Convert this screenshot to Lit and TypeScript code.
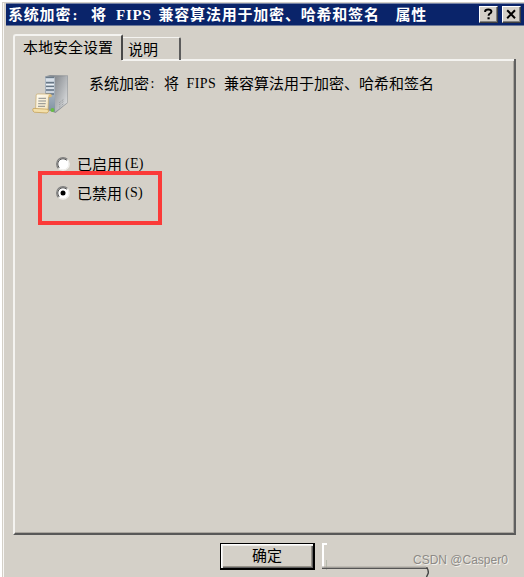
import { LitElement, html, css, svg } from "lit";
import { customElement } from "lit/decorators.js";

type Seg = [string, number, boolean?];

const line = (segs: Seg[]) =>
  segs.map(([t, w, latin]) => html`<span class="seg ${latin ? "lat" : ""}" style="width:${w}px">${t}</span>`);

const TITLE: Seg[] = [
  ["系统加密", 64.5], [":", 18.5, true], ["将", 25], ["FIPS", 42.5, true],
  ["兼容算法用于加密、哈希和签名", 237], ["属性", 34],
];
const HEADING: Seg[] = [
  ["系统加密", 61.5], [":", 13.5, true], ["将", 22.5], ["FIPS", 37.5, true],
  ["兼容算法用于加密、哈希和签名", 211],
];

const serverIcon = svg`
  <defs>
    <linearGradient id="side" x1="0" y1="0" x2="1" y2="1">
      <stop offset="0" stop-color="#85898e"/><stop offset=".5" stop-color="#b4b7ba"/><stop offset="1" stop-color="#e6e7e8"/>
    </linearGradient>
    <linearGradient id="front" x1="0" y1="0" x2="0" y2="1">
      <stop offset="0" stop-color="#c9d3dd"/><stop offset="1" stop-color="#7f90a0"/>
    </linearGradient>
    <linearGradient id="paper" x1="0" y1="0" x2="1" y2="1">
      <stop offset="0" stop-color="#fffdf4"/><stop offset="1" stop-color="#f1dfb5"/>
    </linearGradient>
  </defs>
  <path d="M13 1.5 L18 0 L36 0.5 L35.5 28 L23.5 38 L13 34Z" fill="#8d9297"/>
  <path d="M22.7 2 L35.5 1 L35 27.8 L23 37Z" fill="url(#side)"/>
  <path d="M13.3 1.5 L22.7 2 L23 37 L13.3 34Z" fill="url(#front)"/>
  <path d="M13.6 2.3H22.3M14 7.7H22M14 11.3H22M14 15H22M14 19H22" stroke="#4d5d6e" stroke-width="1.1"/>
  <path d="M14 5H22M14 9.6H22M14 13.2H22M14 17H22" stroke="#edf2f7" stroke-width="1.2"/>
  <path d="M27 30L32 26M27 32.4L32 28.4M27 28L32 24" stroke="#858a8e" stroke-width=".8" stroke-dasharray="1 1"/>
  <circle cx="20.5" cy="35" r="2" fill="#68bd45"/>
  <path d="M4.2 20 Q4 19 6 19 L18 19 Q20.5 20 18.8 22 L16.5 22 L16 36 L3.5 36Z" fill="url(#paper)" stroke="#c9aa6a" stroke-width=".7"/>
  <path d="M16.5 22 Q16.3 19 18.5 19.2 Q20.7 20 19 22Z" fill="#dfbd78"/>
  <path d="M6.5 23.3H14M6.3 26H14M6.2 28.7H13.7M6 31.3H13" stroke="#8b8d8b" stroke-width="1"/>
  <path d="M.8 34 Q1 33.4 2 33.4 L12.5 34 L16 34.3 Q17.5 36.5 15 38 L2.2 37.2 Q.6 36.5.8 34Z" fill="#f3dfa9" stroke="#c5a25a" stroke-width=".8"/>`;

@customElement("app-root")
export class AppRoot extends LitElement {
  static styles = css`
    :host {
      display: block; width: 524px; height: 577px; overflow: hidden; background: #fff;
      font: 15px/18px "Noto Sans CJK SC", sans-serif; color: #000;
    }
    * { box-sizing: border-box; }
    .window {
      position: relative; margin: 2px 0 0 2px; height: 575px; background: #d4d0c8;
      border-left: 1px solid #d4d0c8; border-top: 1px solid #d4d0c8;
      box-shadow: inset 1px 0 #f8f7f5; padding: 0 0 0 3px;
      display: flex; flex-direction: column;
    }
    .title {
      height: 23px; background: #0a246a; color: #fff; display: flex; align-items: center;
      padding: 0 3px 0 2px; font-weight: 700; flex: none;
      border-top: 1px solid #7783a4; border-bottom: 1px solid #6c7898;
    }
    .text { display: flex; flex: 1; white-space: pre; }
    .seg { display: block; flex: none; white-space: pre; }
    .lat { font-family: "Liberation Serif", serif; font-size: 14px; letter-spacing: .4px; padding-top: 1px; }
    .title .text { margin-top: -1px; }
    .title .seg { letter-spacing: .8px; }
    .title .lat { letter-spacing: .8px; font-size: 15px; }
    .cap {
      width: 19px; height: 17px; background: #d4d0c8; margin-left: 4px; flex: none;
      border: 1px solid; border-color: #fff #404040 #404040 #fff; box-shadow: inset -1px -1px #808080;
    }
    .cap svg { display: block; width: 17px; height: 15px; }
    .tabs { display: flex; align-items: flex-end; height: 34px; padding-left: 7px; flex: none; position: relative; z-index: 1; }
    .tab { white-space: pre; }
    .on {
      width: 110px; height: 26px; border: 2px solid #f4f3f0; border-bottom: 0; border-right: 2px solid #484848;
      border-radius: 3px 2px 0 0; background: #d4d0c8; padding: 2px 0 0 8px;
    }
    .off {
      width: 58px; height: 23px; border-top: 1px solid #f4f3f0; border-right: 2px solid #5c5c5c;
      border-radius: 0 2px 0 0; padding: 2px 0 0 5px;
    }
    .panel {
      margin: -1px 8px 0 7px; height: 476px; flex: none; border-left: 2px solid #f4f3f0;
      border-right: 2px solid #606060; border-bottom: 2px solid #585858; position: relative;
      box-shadow: inset -1px -1px #aaa69f; padding: 14px 0 0 17px;
    }
    .panel::before { content: ""; position: absolute; top: 0; left: 107px; right: 0; height: 2px; background: #f4f3f0; }
    .head { display: flex; height: 42px; }
    .icon { width: 38px; height: 40px; margin-top: 2px; flex: none; }
    .head .text { margin: 1px 0 0 19px; }
    .radios { margin: 34px 0 0 24px; }
    .radio { display: flex; height: 29px; align-items: center; }
    .radio svg { width: 14px; height: 14px; margin-right: 7px; }
    .key { font: 14px/18px "Liberation Serif", serif; margin-left: 3px; letter-spacing: .3px; }
    .mark { position: absolute; left: 23px; top: 112px; width: 124px; height: 54px; border: 4px solid #fb3a38; }
    .foot { display: flex; padding: 8px 0 0 214px; flex: 1; position: relative; }
    .ok {
      width: 95px; height: 27px; border: 1px solid #000; border-width: 1px 2px 2px 1px; text-align: center;
      line-height: 22px; box-shadow: inset 1px 1px #fff, inset 2px 2px #efeeeb, inset -1px -1px #606060, inset -2px -2px #969289;
    }
    .ghost { margin-left: 7px; width: 107px; height: 34px; flex: none; }
    .mk {
      position: absolute; left: 407px; top: 17px; font: 12px/16px "Liberation Sans", sans-serif;
      color: #8d8a86; text-shadow: 1px 1px #f2f0ec; white-space: pre;
    }
  `;

  private radio(label: string, key: string, on: boolean) {
    return html`<div class="radio">
      <svg viewBox="0 0 14 14">
        <circle cx="7" cy="7" r="5.8" fill="#fff"/>
        <path d="M2.5 11.5A6.2 6.2 0 0 1 11.5 2.5" fill="none" stroke="#808080" stroke-width="1.2"/>
        <path d="M3.3 10.7A5.2 5.2 0 0 1 10.7 3.3" fill="none" stroke="#505050"/>
        <path d="M11.4 2.6A6.2 6.2 0 0 1 2.6 11.4" fill="none" stroke="#f4f3f0" stroke-width="1.2"/>
        ${on ? svg`<circle cx="7" cy="7" r="2.5" fill="#000"/>` : ""}
      </svg><span>${label}</span><span class="key">${key}</span></div>`;
  }

  render() {
    return html`<div class="window">
      <div class="title">
        <div class="text">${line(TITLE)}</div>
        <div class="cap"><svg viewBox="0 0 17 15"><path d="M5.2 5V4.2Q5.2 2.5 8.3 2.5T11.4 4.6Q11.4 6 9.8 6.7Q8.6 7.3 8.6 8.8" fill="none" stroke="#000" stroke-width="2"/><path d="M7.5 10.3h2.2v2H7.5z"/></svg></div>
        <div class="cap"><svg viewBox="0 0 17 15"><path d="M4.2 3.2L12 11.2M12 3.2L4.2 11.2" stroke="#000" stroke-width="2"/></svg></div>
      </div>
      <div class="tabs"><div class="tab on">本地安全设置</div><div class="tab off">说明</div></div>
      <div class="panel">
        <div class="head">
          <svg class="icon" viewBox="0 0 38 40">${serverIcon}</svg>
          <div class="text">${line(HEADING)}</div>
        </div>
        <div class="radios">${this.radio("已启用", "(E)", false)}${this.radio("已禁用", "(S)", true)}</div>
        <div class="mark"></div>
      </div>
      <div class="foot">
        <div class="ok">确定</div>
        <svg class="ghost" viewBox="0 0 107 34">
          <path d="M1 25V1H5" fill="none" stroke="#fff" stroke-width="2"/>
          <path d="M4.5 17V27" stroke="#b5b9ac"/>
          <path d="M0 25.2H106" stroke="#555" stroke-width="1.5"/>
          <path d="M0 24H104" stroke="#aaa69f" stroke-width="1"/>
          <path d="M104.5 24.5Q106.5 26 106.3 30L104.5 34" fill="none" stroke="#444" stroke-width="1.4"/>
        </svg>
        <div class="mk">CSDN @Casper0</div>
      </div>
    </div>`;
  }
}
